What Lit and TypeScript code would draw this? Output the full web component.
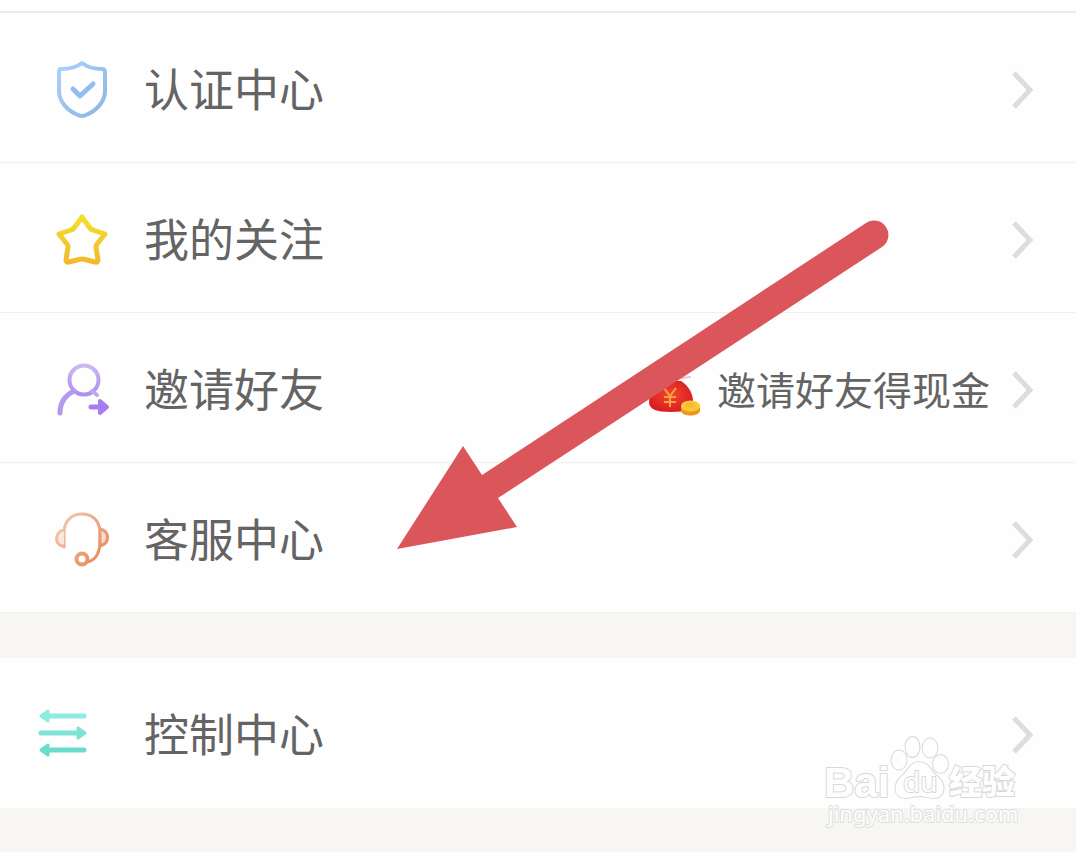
import { LitElement, html, css, svg, nothing, TemplateResult } from "lit";
import { customElement, property } from "lit/decorators.js";

const shield = html`<svg class="icon" viewBox="0 0 60 64" fill="none" stroke="url(#gs)" stroke-width="4" stroke-linecap="round" stroke-linejoin="round" aria-hidden="true">
  <defs><linearGradient id="gs" x1="0" y1="0" x2="1" y2="1"><stop offset="0" stop-color="#a9d2f8"/><stop offset="1" stop-color="#8fb4e6"/></linearGradient></defs>
  <path d="M30 5C25 9 17 11 9 11Q7 11 7 14V33C7 44 16 53 26 57Q30 59 34 57C44 53 53 44 53 33V14Q53 11 50 11C43 11 35 9 30 5Z"/>
  <path d="M21 31L28 38L41 26" stroke-width="5" stroke="#93bdf0"/></svg>`;

const star = html`<svg class="icon" viewBox="0 0 60 64" fill="none" stroke="url(#gy)" stroke-width="5" stroke-linejoin="round" aria-hidden="true">
  <defs><linearGradient id="gy" x1="0" y1="0" x2="0" y2="1"><stop offset="0" stop-color="#f2e02c"/><stop offset="1" stop-color="#f2b92c"/></linearGradient></defs>
  <path d="M30 9L38 20Q39 21.500 41 22L53 26L45 36Q44 37.500 44 39L46 52Q46 55 43 54L33 51.500Q30 50.500 27 51.500L17 54Q14 55 14 52L16 39Q16 37.500 15 36L7 26L19 22Q21 21.500 22 20Z"/></svg>`;

const invite = html`<svg class="icon" viewBox="0 0 60 64" fill="none" stroke-linecap="round" stroke-linejoin="round" aria-hidden="true">
  <defs><linearGradient id="gp" x1="0" y1="0" x2="0" y2="1"><stop offset="0" stop-color="#cbb8ee"/><stop offset="1" stop-color="#ae90ee"/></linearGradient></defs>
  <circle cx="32" cy="22" r="14.500" stroke="url(#gp)" stroke-width="4"/>
  <path d="M22 33C12 38 8 46 8 55" stroke="#b39aee" stroke-width="5"/>
  <path d="M40 33L45 37" stroke="#c0a9f0" stroke-width="4"/>
  <path d="M39 49H50" stroke="#a57ff2" stroke-width="5"/>
  <path d="M48 43L55 49L48 55Z" fill="#a57ff2" stroke="#a57ff2" stroke-width="4"/></svg>`;

const headset = html`<svg class="icon" viewBox="0 0 60 64" fill="none" stroke="url(#go)" stroke-width="3" stroke-linecap="round" stroke-linejoin="round" aria-hidden="true">
  <defs><linearGradient id="go" gradientUnits="userSpaceOnUse" x1="4" y1="10" x2="52" y2="50"><stop offset="0" stop-color="#f3ccb2"/><stop offset="1" stop-color="#e58a5e"/></linearGradient></defs>
  <path d="M12 39V23C13 12 20 6 30 6C40 6 47 12 48 23V34C48 45 43 53 35 54"/>
  <path d="M12 22C3 23 2 36 10 38H12" fill="#fbe8dc"/>
  <path d="M48 21C58 23 58 35 48 38Z" fill="#fbd9c6"/>
  <circle cx="30" cy="51" r="5.500" stroke-width="4"/></svg>`;

const sliders = html`<svg class="icon" viewBox="0 0 60 64" fill="none" stroke-width="5" stroke-linecap="round" stroke-linejoin="round" aria-hidden="true">
  <g stroke="#8debe0" fill="#8debe0"><path d="M10 13H51"/><path d="M8 13L15 8V18Z" stroke-width="3"/></g>
  <g stroke="#7fe2d6" fill="#7fe2d6"><path d="M8 30H49"/><path d="M52 30L45 25V35Z" stroke-width="3"/></g>
  <g stroke="#6bdccb" fill="#6bdccb"><path d="M10 47H51"/><path d="M8 47L15 42V52Z" stroke-width="3"/></g></svg>`;

const moneyBag = html`<svg class="bag" viewBox="0 0 56 48" aria-hidden="true">
  <defs><radialGradient id="gb" cx=".5" cy=".45" r=".6"><stop offset="0" stop-color="#f4462f"/><stop offset="1" stop-color="#d81a20"/></radialGradient></defs>
  <path d="M20 9H36C44 14 48 22 48 29C48 37 40 40 26 40C11 40 4 37 4 30C4 22 12 13 20 9Z" fill="url(#gb)"/>
  <path d="M36 6L46 5" fill="none" stroke="#f6c4c4" stroke-width="2"/>
  <path d="M19 16L25 24L31 16M25 24V35M19 25H31M19 30H31" fill="none" stroke="#f8a23c" stroke-width="2"/>
  <path d="M36 34V39C37 45 54 45 55 39V34Z" fill="#e99a1d"/>
  <ellipse cx="45.500" cy="34" rx="9.500" ry="5.500" fill="#fbc83c"/>
  <ellipse cx="45" cy="33" rx="5" ry="2.500" fill="#f7b832"/></svg>`;

@customElement("menu-row")
class MenuRow extends LitElement {
  @property({ attribute: false }) icon?: TemplateResult;
  @property() label = "";
  @property() note = "";
  @property({ type: Boolean }) outdented = false;

  static styles = css`
    :host { display: block; }
    .row {
      display: flex; align-items: center; box-sizing: border-box;
      min-height: 150px; padding: 4px 40px 0 52px;
      border-bottom: 1px solid #f0f0f0; background: #fefefe;
      color: #646464; text-decoration: none;
    }
    .outdented { padding-left: 33px; border-bottom-color: #fefefe; }
    .icon { width: 60px; height: 64px; flex: none; }
    .label { margin-left: 32px; padding-bottom: 4px; font-size: 45px; line-height: 60px; white-space: nowrap; }
    .outdented .label { margin-left: 51px; }
    .note { display: flex; align-items: center; margin-left: auto; padding-bottom: 4px; font-size: 39px; line-height: 52px; white-space: nowrap; }
    .bag { width: 56px; height: 48px; margin-right: 16px; margin-top: 16px; }
    .chevron { width: 26px; height: 44px; flex: none; margin-left: auto; }
    .note + .chevron { margin-left: 20px; }
  `;

  render() {
    return html`<a class="row ${this.outdented ? "outdented" : ""}" href="#">
      ${this.icon}
      <span class="label">${this.label}</span>
      ${this.note ? html`<span class="note">${moneyBag}${this.note}</span>` : nothing}
      <svg class="chevron" viewBox="0 0 26 44" fill="none" stroke="#dddddd" stroke-width="5" aria-hidden="true"><path d="M4 5L20 22L4 39"/></svg>
    </a>`;
  }
}

@customElement("app-root")
class AppRoot extends LitElement {
  static styles = css`
    :host {
      display: block; position: relative; min-height: 100vh; overflow: hidden;
      background: #f7f6f3;
      font-family: "Noto Sans CJK SC", "Noto Sans", sans-serif;
    }
    .strip { height: 11px; background: #fefefe; border-bottom: 2px solid #ebebeb; }
    .group + .group { margin-top: 45px; }
    .arrow { position: absolute; left: 390px; top: 210px; width: 510px; height: 350px; pointer-events: none; }
    .mark { position: absolute; right: 50px; top: 730px; width: 210px; height: 106px; pointer-events: none; }
    .outline { fill: #fefefe; stroke: #d8d8d8; stroke-width: 2px; paint-order: stroke; stroke-linejoin: round; }
    .latin { font: 700 42px "Liberation Sans", sans-serif; }
    .du { font: 400 28px "Noto Sans", sans-serif; }
    .cjk { font: 900 33px "Noto Sans CJK SC", sans-serif; }
    .url { font: 400 22px "Noto Sans", sans-serif; stroke: #dedede; }
  `;

  render() {
    return html`
      <div class="strip"></div>
      <nav class="group">
        <menu-row .icon=${shield} label="认证中心"></menu-row>
        <menu-row .icon=${star} label="我的关注"></menu-row>
        <menu-row .icon=${invite} label="邀请好友" note="邀请好友得现金"></menu-row>
        <menu-row .icon=${headset} label="客服中心"></menu-row>
      </nav>
      <nav class="group">
        <menu-row .icon=${sliders} label="控制中心" outdented></menu-row>
      </nav>
      <svg class="arrow" viewBox="0 0 510 350" aria-hidden="true">
        <path d="M7 339L73 236L92 265L476 13A14 14 0 0 1 492 37L108 288L127 317Z" fill="#da565b"/>
      </svg>
      <svg class="mark" viewBox="0 0 210 106">
        ${svg`<text class="outline latin" x="8" y="67">Bai</text>
        <g class="outline">
          <ellipse cx="83" cy="30" rx="7.500" ry="9.500"/><ellipse cx="96.500" cy="17" rx="7" ry="10"/>
          <ellipse cx="114" cy="18" rx="7.500" ry="9.500"/><ellipse cx="124.500" cy="34" rx="7.500" ry="9"/>
          <path d="M103 32C94 32 92 41 86 46C77 53 77 68 89 68C95 68 99 66 103 66C108 66 112 68 119 68C130 67 130 53 121 46C114 41 113 32 103 32Z"/>
        </g>
        <text class="outline du" x="87" y="62">du</text>
        <text class="outline cjk" x="133" y="64">经验</text>
        <text class="outline url" x="12" y="92">jingyan.baidu.com</text>`}
      </svg>`;
  }
}
